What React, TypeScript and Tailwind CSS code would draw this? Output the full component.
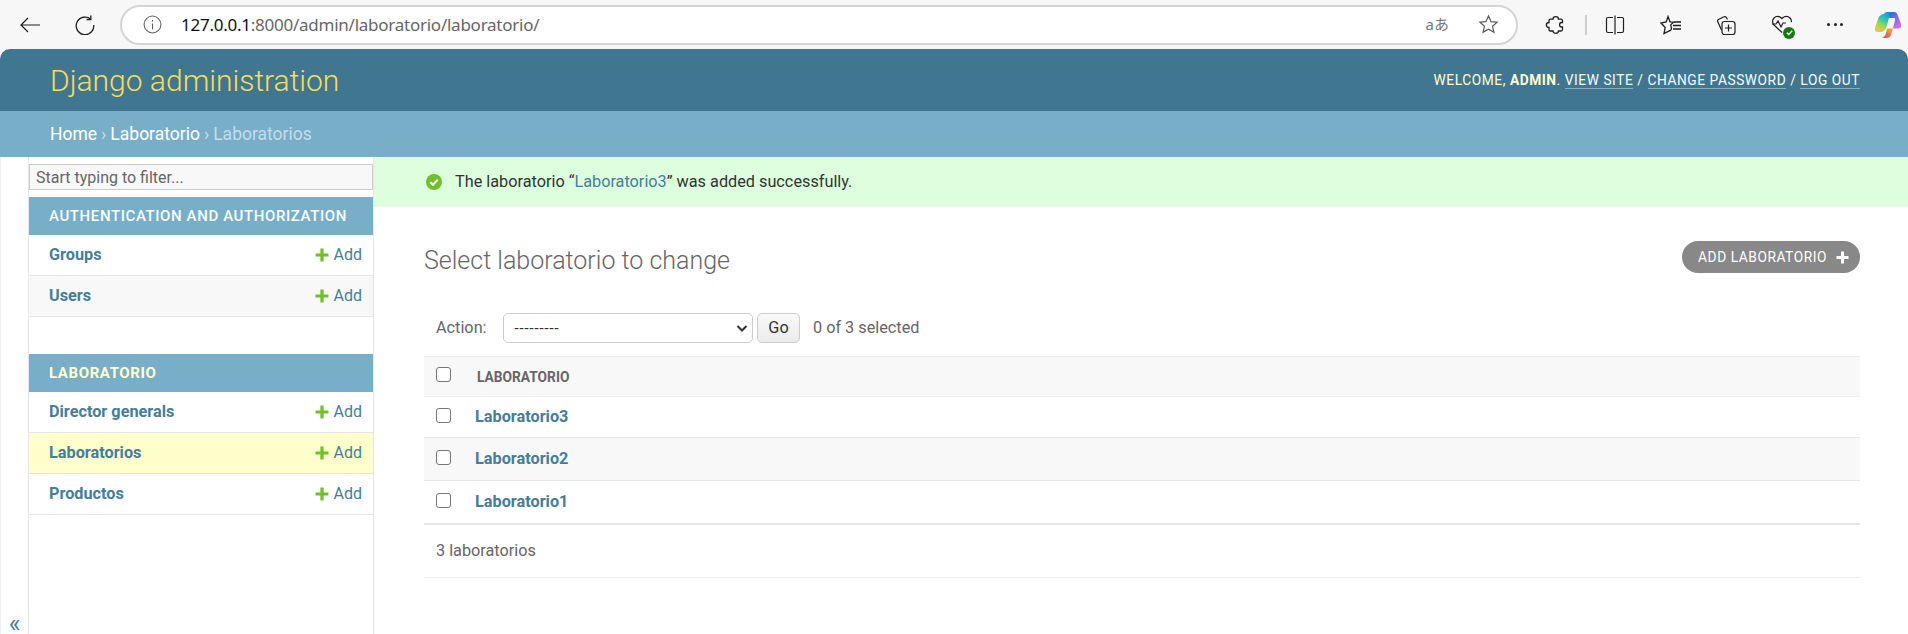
const APP_GROUPS = [
  {
    name: 'AUTHENTICATION AND AUTHORIZATION',
    accent: false,
    models: [
      { name: 'Groups', bg: 'bg-white' },
      { name: 'Users', bg: 'bg-[#f8f8f8]' },
    ],
  },
  {
    name: 'LABORATORIO',
    accent: true,
    models: [
      { name: 'Director generals', bg: 'bg-white' },
      { name: 'Laboratorios', bg: 'bg-[#ffc]' },
      { name: 'Productos', bg: 'bg-white' },
    ],
  },
];

const ROWS = [
  { name: 'Laboratorio3', bg: 'bg-white', h: 'h-[41px]' },
  { name: 'Laboratorio2', bg: 'bg-[#f8f8f8]', h: 'h-[43px]' },
  { name: 'Laboratorio1', bg: 'bg-white', h: 'h-[43px]' },
];

function PlusIcon({ className }: { className: string }) {
  return (
    <svg viewBox="0 0 13 13" className={className} fill="currentColor">
      <path d="M5 0.5h3v4.5h4.5v3H8v4.5H5V8H0.5V5H5z" />
    </svg>
  );
}

function BrowserBar() {
  return (
    <div className="h-[49px] bg-[#f7f7f7] flex items-center shrink-0 relative">
      <svg viewBox="0 0 20 20" className="w-5 h-5 ml-[20px] text-[#1f1f1f]" fill="none" stroke="currentColor" strokeWidth="1.2">
        <path d="M20 10H1M8 3 1 10l7 7" />
      </svg>
      <svg viewBox="0 0 20 20" className="w-5 h-5 ml-[35px] text-[#1f1f1f]" fill="none" stroke="currentColor" strokeWidth="1.3">
        <path d="M15.800 4.200A8.800 8.800 0 1 0 18.800 10" />
        <path d="M15.800 0.500v4.200h-4.300" />
      </svg>
      <div className="ml-[25px] w-[1398px] h-[40px] rounded-[20px] bg-white border-2 border-[#d4d4d4] flex items-center pl-[21px] pr-[17px]">
        <svg viewBox="0 0 18 18" className="w-[19px] h-[19px] text-[#5f5f5f]" fill="none" stroke="currentColor" strokeWidth="1">
          <circle cx="9" cy="9" r="8" />
          <path d="M9 8v5.500M9 4.800v1.400" />
        </svg>
        <span className="ml-[19px] text-[17px] font-['Noto_Sans','Open_Sans',sans-serif] tracking-[-0.25px] text-[#666]">
          <span className="text-[#111]">127.0.0.1</span>:8000/admin/laboratorio/laboratorio/
        </span>
        <div className="ml-auto flex items-center gap-[29px]">
          <span className="text-[15px] leading-none text-[#777] font-['Noto_Sans','Noto_Sans_CJK_JP',sans-serif]">aあ</span>
          <svg viewBox="0 0 22 22" className="w-[21px] h-[21px] text-[#555]" fill="none" stroke="currentColor" strokeWidth="1.2">
            <path d="M11 2l2.700 6 6.300.6-4.800 4.200 1.500 6.400L11 16l-5.700 3.200 1.500-6.400L2 8.600 8.300 8z" />
          </svg>
        </div>
      </div>
      <div className="flex items-center ml-[27px] text-[#1f1f1f]">
        <svg viewBox="0 0 20 20" className="w-5 h-5" fill="none" stroke="currentColor" strokeWidth="1.3">
          <path d="M8 4.200C8 .8 13.500 .8 13.500 4.200H16Q17.500 4.200 17.500 5.700V7.500H16.500C14 7.500 14 12 16.500 12H17.500V14.500Q17.500 16 16 16H13.500C13.500 19.200 8 19.200 8 16H5.500Q4 16 4 14.500V12.500C.5 12.500 .5 7.500 4 7.500V5.700Q4 4.200 5.500 4.200Z" />
        </svg>
        <div className="w-[2px] h-[20px] bg-[#cfcfcf] ml-[20px]" />
        <svg viewBox="0 0 20 20" className="w-5 h-5 ml-[18px]" fill="none" stroke="currentColor" strokeWidth="1.2">
          <path d="M8 2.500H3a1.500 1.500 0 0 0-1.500 1.500v12A1.500 1.500 0 0 0 3 17.500h5M12 2.500h5A1.500 1.500 0 0 1 18.500 4v12a1.500 1.500 0 0 1-1.500 1.500h-5M10 .5v19" />
        </svg>
        <svg viewBox="0 0 22 20" className="w-[22px] h-5 ml-[35px]" fill="none" stroke="currentColor" strokeWidth="1.3">
          <path d="M8 1.500l2 5.300 3.500.4-2.800 2.700.8 3.800-.8 1.500L4 18.500l1.200-6L1 8l5.200-1z" />
          <path d="M14 7h7M13 10.500h8M13 14h8" />
        </svg>
        <svg viewBox="0 0 22 22" className="w-[22px] h-[22px] ml-[33px]" fill="none" stroke="currentColor" strokeWidth="1.2">
          <path d="M6.500 16 2.800 7.800a2 2 0 0 1 1-2.600L9 2.800a2 2 0 0 1 2.600 1l.8 1.700" />
          <rect x="7" y="7.500" width="13" height="13" rx="2.500" />
          <path d="M13.500 10.500v7M10 14h7" />
        </svg>
        <div className="relative w-[24px] h-[22px] ml-[33px]">
          <svg viewBox="0 0 24 22" className="w-[24px] h-[22px]" fill="none" stroke="currentColor" strokeWidth="1.2">
            <path d="M12 18.500 4 11a5 5 0 0 1 0-7 5.200 5.200 0 0 1 7.400 0l.6.6.6-.6a5.200 5.200 0 0 1 7.400 0c1.200 1.200 1.600 2.800 1.300 4.200" />
            <path d="M2 10h4l2-3 3 6 2-4h3" />
          </svg>
          <div className="absolute right-[-1px] bottom-[-3px] w-[12px] h-[12px] rounded-full bg-[#107c10] flex items-center justify-center">
            <svg viewBox="0 0 10 10" className="w-[9px] h-[9px] text-white" fill="none" stroke="currentColor" strokeWidth="1.6">
              <path d="M2 5.200 4.200 7.200 8 3" />
            </svg>
          </div>
        </div>
        <div className="flex items-center gap-[3.5px] ml-[33px]">
          <span className="w-[3px] h-[3px] rounded-full bg-[#1f1f1f]" />
          <span className="w-[3px] h-[3px] rounded-full bg-[#1f1f1f]" />
          <span className="w-[3px] h-[3px] rounded-full bg-[#1f1f1f]" />
        </div>
        <svg viewBox="0 0 28 28" className="w-[28px] h-[28px] ml-[31px]">
          <defs>
            <linearGradient id="copilotA" x1="0.7" y1="0" x2="0.2" y2="1">
              <stop offset="0" stopColor="#1c8ae8" />
              <stop offset="0.4" stopColor="#35c8b0" />
              <stop offset="0.7" stopColor="#a5d84a" />
              <stop offset="1" stopColor="#f9c23c" />
            </linearGradient>
            <linearGradient id="copilotB" x1="0.2" y1="0" x2="0.8" y2="1">
              <stop offset="0" stopColor="#2468e0" />
              <stop offset="0.5" stopColor="#8a6cf0" />
              <stop offset="1" stopColor="#e66ad0" />
            </linearGradient>
            <linearGradient id="copilotC" x1="0.8" y1="0" x2="0.2" y2="1">
              <stop offset="0" stopColor="#f9a53a" />
              <stop offset="1" stopColor="#ef4458" />
            </linearGradient>
          </defs>
          <path d="M10 3Q10.500 1 13 1H19Q16.500 1.500 15.500 5L12.500 16Q11.500 20 7.500 21H4Q0 21 1 17L4 8Q5.500 3.500 10 3Z" fill="url(#copilotA)" />
          <path d="M15.500 3Q16.500 1 18.500 1H20Q23 1 24 5L27 13Q28 17.500 24 17.500H19L21 9Q21.500 7 20 7H15Z" fill="url(#copilotB)" />
          <path d="M13 17.500H19L17 24Q16 27 12 27H8Q11 26 12 22Z" fill="url(#copilotC)" />
        </svg>
      </div>
    </div>
  );
}

function Sidebar() {
  return (
    <div className="flex shrink-0">
      <div className="w-[28px] border-l border-[#eee] flex flex-col justify-end items-center pb-[1px]">
        <span className="text-[25px] leading-[18px] text-[#447e9b] font-['Roboto',sans-serif]">«</span>
      </div>
      <nav className="w-[346px] border-x border-[#e6e6e6] pt-[7px]">
        <input
          readOnly
          placeholder="Start typing to filter..."
          className="block w-[344px] h-[26px] bg-[#f8f8f8] border border-[#ccc] px-[6px] text-[16px] font-['Roboto',sans-serif] placeholder:text-[#666] outline-none"
        />
        <div className="mt-[7px]">
          {APP_GROUPS.map((group) => (
            <div key={group.name} className="mb-[37px]">
              <div
                className={`h-[38px] bg-[#79aec8] pl-[20px] flex items-center text-[15px] tracking-[0.6px] ${
                  group.accent ? 'font-bold text-[#ffc]' : 'font-medium text-[#f5fdff]'
                }`}
              >
                {group.name}
              </div>
              {group.models.map((model) => (
                <div
                  key={model.name}
                  className={`h-[41px] border-b border-[#e6e6e6] pl-[20px] pr-[11px] flex items-center justify-between ${model.bg}`}
                >
                  <a className="text-[16.25px] font-bold text-[#447e9b]">{model.name}</a>
                  <a className="flex items-center gap-[5px] text-[16px] text-[#447e9b]">
                    <PlusIcon className="w-[14px] h-[14px] text-[#70bf2b]" />
                    Add
                  </a>
                </div>
              ))}
            </div>
          ))}
        </div>
      </nav>
    </div>
  );
}

function ChangeList() {
  return (
    <main className="flex-1 min-w-0">
      <div className="h-[50px] bg-[#dfd] pl-[52px] flex items-center text-[16.25px] text-[#333]">
        <svg viewBox="0 0 16 16" className="w-4 h-4 mr-[13px]">
          <circle cx="8" cy="8" r="8" fill="#70bf2b" />
          <path d="M4.300 8.300 7 10.800l4.700-5" fill="none" stroke="#fff" strokeWidth="2" />
        </svg>
        The laboratorio “<a className="text-[#447e9b]">Laboratorio3</a>” was added successfully.
      </div>

      <div className="pl-[50px] pr-[48px]">
        <div className="flex items-start justify-between pt-[34px] h-[106px]">
          <h1 className="text-[25px] font-light text-[#666] leading-[36px] mt-[2px]">Select laboratorio to change</h1>
          <a className="h-[32px] w-[178px] rounded-[16px] bg-[#888] text-white flex items-center justify-end pr-[11px] gap-[9px] text-[13.75px] tracking-[0.55px]">
            ADD LABORATORIO
            <PlusIcon className="w-[13px] h-[13px]" />
          </a>
        </div>

        <div className="h-[43px] flex items-start pl-[12px] text-[16.25px] text-[#666]">
          <span className="leading-[30px] w-[67px]">Action:</span>
          <div className="w-[250px] h-[30px] rounded-[5px] border border-[#ccc] bg-white flex items-center justify-between pl-[10px] pr-[4px] text-[#333]">
            <span className="text-[15px] font-['Liberation_Sans',sans-serif]">---------</span>
            <svg viewBox="0 0 12 12" className="w-[12px] h-[12px] text-[#333]" fill="none" stroke="currentColor" strokeWidth="2">
              <path d="M1.500 4 6 8.500 10.500 4" />
            </svg>
          </div>
          <button className="ml-[4px] w-[43px] h-[30px] rounded-[5px] border border-[#ccc] bg-linear-to-b from-[#f8f8f8] to-[#ececec] text-[#333] text-[16.25px]">
            Go
          </button>
          <span className="ml-[13px] leading-[30px]">0 of 3 selected</span>
        </div>

        <div className="border-t border-[#eee] h-[41px] bg-[#f8f8f8] border-b flex items-center pl-[12px]">
          <span className="w-[15px] h-[15px] rounded-[3px] border border-[#767676] bg-white mb-[5px]" />
          <span className="ml-[26px] mt-[2px] text-[13.75px] font-bold text-[#666]">LABORATORIO</span>
        </div>
        {ROWS.map((row) => (
          <div key={row.name} className={`${row.h} ${row.bg} border-b border-[#e6e6e6] flex items-center pl-[12px]`}>
            <span className="w-[15px] h-[15px] rounded-[3px] border border-[#767676] bg-white mb-[4px]" />
            <a className="ml-[24px] text-[16.25px] font-bold text-[#447e9b]">{row.name}</a>
          </div>
        ))}
        <div className="h-[54px] border-t border-b border-t-[#e6e6e6] border-b-[#eee] flex items-center pl-[12px] text-[16.25px] text-[#666]">
          3 laboratorios
        </div>
      </div>
    </main>
  );
}

export default function App() {
  return (
    <div className="h-[634px] overflow-hidden flex flex-col bg-white font-['Roboto',sans-serif]">
      <BrowserBar />
      <header className="h-[62px] shrink-0 bg-[#417690] rounded-t-[10px] flex items-center justify-between pl-[50px] pr-[48px]">
        <div className="text-[30px] font-light text-[#f5dd5d]">Django administration</div>
        <div className="text-[13.75px] tracking-[0.55px] text-[#ffc]">
          WELCOME, <strong className="font-bold">ADMIN</strong>.{' '}
          <a className="border-b border-[#ffffff66] text-[#f5fdff]">VIEW SITE</a> /{' '}
          <a className="border-b border-[#ffffff66] text-[#f5fdff]">CHANGE PASSWORD</a> /{' '}
          <a className="border-b border-[#ffffff66] text-[#f5fdff]">LOG OUT</a>
        </div>
      </header>
      <div className="h-[46px] shrink-0 bg-[#79aec8] pl-[50px] flex items-center text-[17.5px] text-[#c4dce8]">
        <a className="text-white">Home</a>
        <span className="mx-[4px]">›</span>
        <a className="text-white">Laboratorio</a>
        <span className="mx-[4px]">›</span>
        Laboratorios
      </div>
      <div className="flex flex-1 min-h-0">
        <Sidebar />
        <ChangeList />
      </div>
    </div>
  );
}
